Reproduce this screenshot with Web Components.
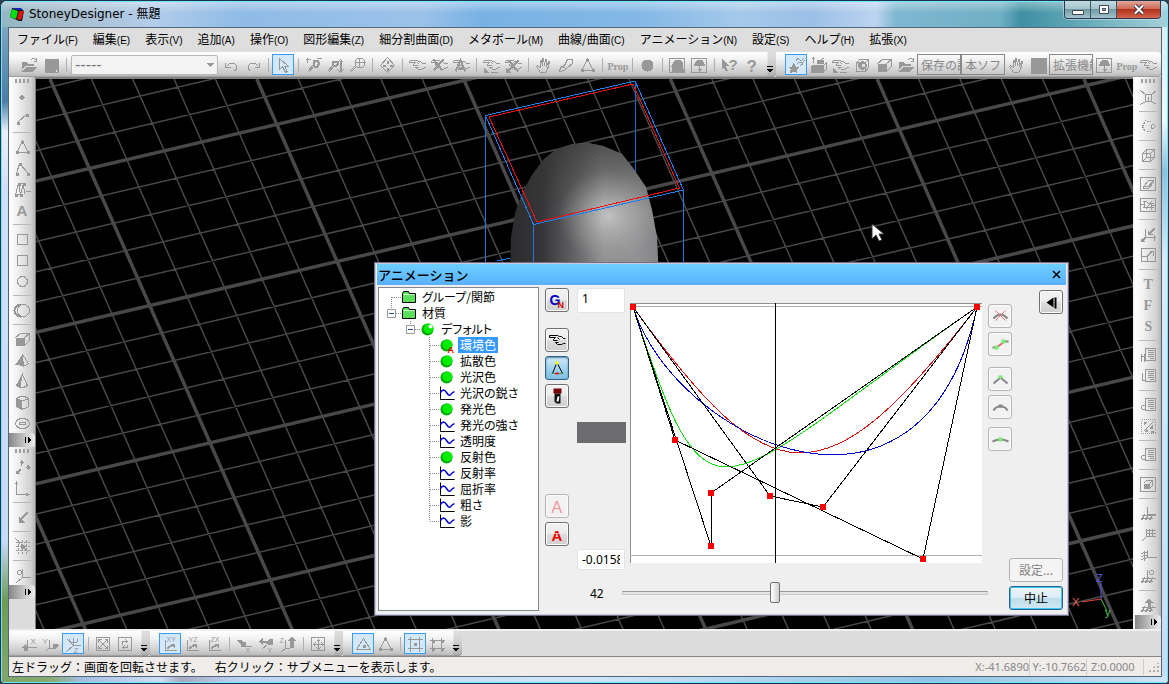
<!DOCTYPE html>
<html lang="ja">
<head>
<meta charset="utf-8">
<title>StoneyDesigner - 無題</title>
<style>
html,body{height:100%;margin:0}
body{font:12px/16px "Liberation Sans","Noto Sans CJK JP",sans-serif;color:#000;background:#2a4250;overflow:hidden}
</style>
</head>
<body>
<app-window caption="StoneyDesigner - 無題">
  <menu-bar slot="menu">
    <menu-item key="F">ファイル</menu-item><menu-item key="E">編集</menu-item><menu-item key="V">表示</menu-item><menu-item key="A">追加</menu-item><menu-item key="O">操作</menu-item><menu-item key="Z">図形編集</menu-item><menu-item key="D">細分割曲面</menu-item><menu-item key="M">メタボール</menu-item><menu-item key="C">曲線/曲面</menu-item><menu-item key="N">アニメーション</menu-item><menu-item key="S">設定</menu-item><menu-item key="H">ヘルプ</menu-item><menu-item key="X">拡張</menu-item>
  </menu-bar>
  <div slot="top" style="display:flex">
    <tool-bar items="open save | combo undo redo | *arrow | zoomPm zoomUd zoomC | move | point pointX pointA | fpoint fpointX | hand pen triNode | prop | disc | treeBox tree | help question more"></tool-bar>
    <tool-bar style="flex:1" items="*star boxes fpoint ballBox cube open t:保存の設 t:本ソフ hand block t:拡張機能 tree prop point"></tool-bar>
  </div>
  <div slot="left">
    <tool-bar vertical items="dot line | triNode angle poly letterA | rect rect circle | sphere | cube pyramid cone cylinder torus more"></tool-bar>
    <tool-bar vertical items="axes3 corner | arrowSw | gridX | origin more"></tool-bar>
  </div>
  <scene-view slot="view"></scene-view>
  <div slot="right">
    <tool-bar vertical items="boxLines | view | wire | boxWire boxMulti | axArrow boxArrow | letterT letterF letterS | sheet sheet2 | sheet3 dots | sheet3 | boxCube | planeUp gridCorner planeSide planeO | planeArrow more"></tool-bar>
  </div>
  <div slot="bottom" style="display:flex">
    <tool-bar items="rotX rotY *rotZ | fit refresh more"></tool-bar>
    <tool-bar items="*planeXY planeYZ planeZX | mvX mvY mvZ | center more"></tool-bar>
    <tool-bar items="*triDot triNode | *gridDot gridNode more"></tool-bar>
  </div>
  <status-bar slot="status" x="-41.6890" y="-10.7662" z="0.0000">左ドラッグ：画面を回転させます。　右クリック：サブメニューを表示します。</status-bar>
</app-window>

<script>
/* ---------- icon set: 16x16 grid, drawn in the current colour ---------- */
const S = (d, a = '') => `<path d="${d}" ${a}/>`;
const F = d => `<path d="${d}" fill="currentColor" stroke="none"/>`;
const T = (t, x, y, s, a = '') => `<text x="${x}" y="${y}" font-size="${s}" fill="currentColor" stroke="none" ${a}>${t}</text>`;
const point = S('M0 3h7l3 1h1l2 2h3M0 3v2h6M4 8h4M6 10h3M8 12h4l3-2h1M6 5l-2 2v1M8 5l2 2M6 10l2 2');
const lens = S('M8 7l-6 7M9 8l-6 7') + S('M8 5l1-2h3l1 2v2l-1 2H9L8 7z', 'stroke-width="2"');
const sheet = S('M5 1h10v12h-10zM7 3h6M7 5h6M7 7h6M7 9h6M9 11h4');
const cube = S('M1 6l5-4h9l-5 4v8M15 2v7l-5 5') + F('M1 6h9v8H1z');
const plane = S('M1 10h14M0 13h12M4 9l-3 6M8 9l-3 6M12 9l-3 6');
const nodes = p => p.map(([x, y]) => F(`M${x - 1} ${y - 1}h3v3h-3z`)).join('');
const star = F('M5 5l2 4h4l-3 3 1 4-4-2-4 2 1-4-3-3h4z');
const serif = 'font-family="Liberation Serif" font-weight="bold"';
const ICONS = {
  open: F('M0 5l1-1h4l1 2h6v2H4l-4 5z') + F('M1 14l4-5h11l-4 5z') + S('M9 3l2-2h2l2 2M15 0v4h-3'),
  save: F('M1 1h14v14H1z') + '<path d="M12 12h1v2h-1z" fill="#eee" stroke="none"/>',
  undo: S('M2 5v5h5M3 9l3-3h5l2 2v4l-2 1'), redo: S('M14 5v5H9M13 9l-3-3H5L3 8v4l2 1'),
  arrow: S('M4 1v11l3-3 3 6 2-1-3-5h4z'),
  zoomPm: lens + S('M0 2h5M2 0v5M11 1h5'), zoomUd: S('M6 7l-6 7M7 8l-6 7') + S('M5 5l1-1h3l1 1v2L9 8H6L5 7z', 'stroke-width="2"') + S('M13 3v11', 'stroke-width="2"') + S('M10 5l3-3 3 3M10 12l3 3 3-3'),
  zoomC: S('M6 8l-6 6M7 9l-6 6') + S('M5 5h11M10 0v10M6 3l2-2h5l2 2v5l-2 2H8L6 8z'),
  move: S('M8 0l7 8-7 7-7-7z') + F('M7 3h2v3H7zM7 10h2v3H7zM3 7h3v2H3zM10 7h3v2h-3z'),
  point, pointX: point + S('M2 2l9 11M12 2L2 13', 'stroke-width="2"'),
  pointA: point + S('M2 14L7 3l5 11M4 11h6', 'stroke-width="2"'),
  fpoint: point + F('M0 15v-5l6 5z') + S('M7 15h7'),
  fpointX: point + F('M0 15v-5l6 5z') + S('M3 3l10 11M13 3L3 13', 'stroke-width="2"'),
  hand: S('M5 15L1 9l1-1 3 2V3h1l1 5V1h1l1 7 1-6h1v7l2-5h1l-2 8-2 3z'),
  pen: S('M2 14l1-4 4-2 3-6h5v4l-5 4-3 3zM6 10l3 1'),
  triNode: S('M8 2L2 13h12z') + nodes([[7, 2], [2, 12], [13, 12]]),
  prop: T('Prop', -2, 12, 10, serif),
  disc: '<circle cx="8" cy="8" r="6" fill="currentColor" stroke="none"/>',
  treeBox: S('M0 1h15v14H0z') + F('M2 14V9l2-5 3-2h3l3 3 1 6v3z'),
  tree: S('M0 1h15v14H0zM8 8v6') + F('M2 8l2-4 3-2 4 1 3 5zM5 11h6l-3 3z'),
  help: F('M0 1l7 7-3 1 2 4-2 1-2-4-2 2z') + T('?', 7, 12, 15, 'font-weight="bold"'),
  question: T('?', 3, 14, 17, 'font-weight="bold"'),
  star: star + S('M7 4q2-4 4-2t4-1M9 7q1-3 3-2t4-2M11 9q1-2 4-3'),
  boxes: F('M0 9l3-2h10v8H0zM6 2h7v4H6z') + S('M3 5V0M1 2l2-2 2 2M13 8l3-3v7l-3 2M11 2l3-2'),
  ballBox: S('M2 5l3-3h9l-3 3v9M14 2v8l-3 4H2V5h9') + '<circle cx="8" cy="8" r="4" fill="currentColor"/><path d="M7 6h3v3H7z" fill="#ddd" stroke="none"/>',
  cube, block: F('M0 0h16v16H0z'),
  dot: F('M7 5l3 3-3 3-3-3z'), line: S('M3 12l9-8') + nodes([[3, 12], [12, 4]]),
  angle: S('M2 13L5 3l9 10') + nodes([[2, 13], [5, 3], [13, 13]]),
  poly: S('M1 13L4 2h5l-3 11zM4 2l2 11M9 2l1 11M11 10h5') + nodes([[1, 13], [6, 13], [4, 2], [9, 2]]),
  letterA: T('A', 2, 13, 15, 'font-weight="bold"'), letterT: T('T', 3, 12, 14, serif), letterF: T('F', 3, 12, 14, serif), letterS: T('S', 4, 12, 14, serif),
  rect: S('M3 3h10v10H3z'), circle: '<circle cx="8" cy="8" r="5"/>',
  sphere: '<circle cx="9" cy="8" r="6"/>' + S('M6 2a6 6 0 0 0 0 12', 'stroke-width="2"'),
  pyramid: F('M8 2L1 12l8 2z') + S('M8 2l6 9-5 3z'), cone: F('M8 1L2 12l4 2z') + S('M8 1L2 12q5 4 11 0z'),
  cylinder: F('M2 3l5 3v9l-5-3z') + S('M2 4q6-4 12 0v8q-6 5-12 0zM2 4q6 4 12 0'),
  torus: S('M1 8a7 5 0 1 0 14 0a7 5 0 1 0-14 0M5 8a3 1.500 0 1 0 6 0a3 1.500 0 1 0-6 0'),
  axes3: S('M7 6V2M6 4l1-2 2 2M11 8h4M13 6l2 2-2 2M6 10l-4 4M2 11v3h3', 'stroke-width="1.500"'),
  corner: S('M2 2v12h12M1 4l1-2 1 2M12 13l2 1-2 1'),
  arrowSw: S('M13 3L5 11', 'stroke-width="2"') + F('M4 7v6h6z'),
  gridX: S('M4 1v14M8 1v14M12 1v14M1 4h14M1 8h14M1 12h14M1 0l14 15', 'stroke-dasharray="3 1"') + F('M6 6h4v4H6z'),
  origin: S('M2 15l6-5h8M8 10V1') + '<circle cx="5" cy="5" r="2"/>',
  boxLines: S('M5 5h6v7H5zM0 1l5 4M16 1l-5 4M0 15l5-3M16 15l-5-3M8 7v5'),
  view: S('M2 8L5 2M2 8l3 6', 'stroke-dasharray="2 1"') + S('M6 3h4M6 13h4', 'stroke-dasharray="2 1"') + S('M11 6h2l2 2-2 2h-2V6'),
  wire: S('M2 6h8v8H2zM6 2h8v8H6zM2 6l4-4M10 6l4-4M2 14l4-4M10 14l4-4'),
  boxWire: S('M0 1h15v13H0zM3 10l5-6h5l-5 6zM3 10v2h5l5-6V4'),
  boxMulti: S('M0 1h15v13H0zM2 4h4l2 2h5M2 10h11M4 4v6M11 6v6M0 7h4M11 8h4M5 12l6-8'),
  axArrow: S('M5 2v9h10M14 2L8 8M8 4v4h4M5 11l-4 4M1 12v3h3M14 8v6', 'stroke-width="1.500"'),
  boxArrow: S('M1 1h14v13H1zM1 9h6v5M7 8l5-4M9 4h4v4', 'stroke-width="1.300"'),
  sheet: sheet + S('M1 9h4M1 6v8M4 6v8'), sheet2: sheet + S('M2 4v8h3'), sheet3: sheet + '<circle cx="3" cy="10" r="2"/>',
  dots: S('M1 1h14v14H1z', 'stroke-dasharray="1 1"') + S('M3 13l10-10') + F('M3 3h4l-4 4zM12 6v4H9zM6 10l2 3H5zM10 12h3v2h-3z'),
  boxCube: S('M0 1h15v14H0z', 'stroke-width="1.500"') + F('M3 7h6v5H3z') + S('M3 7l3-3h6v5l-3 3V7l3-3'),
  planeUp: plane + S('M7 11V1M7 9h8'), planeSide: S('M4 3v10M7 2v8h9M1 6l7-2M1 9l7-2M1 12l6-2'),
  gridCorner: S('M1 15l5-5M6 2v8h9M9 2v8M12 2v8M6 4h9M6 7h9'),
  planeO: plane + S('M7 11V1') + '<circle cx="11" cy="4" r="2"/>', planeArrow: plane + F('M8 1L4 5h3v6h3V5h3z'),
  rotX: S('M0 12l4-4M4 8l3 3M6 11h9M6 11V3') + F('M1 9h5v5H3z') + T('X', 9, 7, 8),
  rotY: S('M6 3v9M6 12h4M2 15l4-4') + F('M9 7h4l2 2-2 3H9z') + T('Y', -1, 7, 8),
  rotZ: S('M8 9V1M4 2v3l2 1h5l1-1V2M2 3l6 6M1 15l7-6h7') + T('Z', 8, 16, 8),
  fit: S('M1 1h13v13H1zM3 3l9 9M12 3l-9 9M3 6V3h3M9 3h3v3M3 9v3h3M12 9v3H9'),
  refresh: S('M1 1h13v13H1zM5 8V5h5M8 3l2 2-2 2M10 8v3H5M7 9l-2 2 2 2'),
  ...Object.fromEntries(['XY', 'YZ', 'ZX'].map(p => ['plane' + p, S('M3 3v11h11') + S('M5 12l5-4', 'stroke-width="2"') + F('M7 7h5v5z') + T(p, 4, 5, 7)])),
  mvX: F('M0 3h4l3 3 2-1v5H4l1-2-4-3z') + S('M6 10h9M7 7l4 4') + T('X', 9, 16, 7),
  mvY: F('M0 5l4-4v3h5l2-2h3v6H9L6 6H4v3z') + S('M4 12l5-4') + T('Y', 9, 16, 7),
  mvZ: F('M11 0l4 4h-2v7H9V4H7z') + S('M5 3v9M1 15l4-3h4') + T('Z', -1, 6, 7),
  center: S('M1 1h13v13H1zM3 8h10M8 3v10M3 8l2-2M3 8l2 2M13 8l-2-2M13 8l-2 2M8 3L6 5M8 3l2 2M8 13l-2-2M8 13l2-2'),
  triDot: S('M8 2L1 13h14z') + F('M7 8h3v3H7z'),
  gridDot: S('M3 0v15M12 0v15M0 3h15M0 12h15', 'stroke-width="1.300"') + F('M6 6h3v3H6z'),
  gridNode: S('M3 1v14M12 1v14M0 4h15M0 12h15') + nodes([[3, 4], [12, 4], [3, 12], [12, 12]]),
  /* animation panel */
  gn: T('G', 0, 12, 14, 'font-weight="bold" style="fill:#0000c0"') + T('N', 8, 15, 9, 'font-weight="bold" style="fill:#d00000"'),
  handDark: S('M0 3h8l2 1h2l2 2h2M0 3v2h6M4 8h4M6 10h3M8 12h4l2-1h2M6 5l-2 2v1M8 5l2 2M6 10l2 2', 'style="stroke:#000"'),
  tri3: S('M7 3L3 13M8 3l5 10', 'style="stroke:#000"') + S('M2 13h12', 'style="stroke:#30a060"') + '<g stroke="none"><path fill="#ff0" d="M6 1h3v3H6z"/><path fill="red" d="M6 12h3v2H6z"/></g>',
  brush: '<g stroke="none"><path fill="#700" d="M4 0h8v5H4z"/><path fill="#111" d="M5 5h6v10H7l-2-2z"/><path fill="#fff" d="M8 8h2l-1 5H7z"/></g>',
  aDim: T('A', 2, 14, 16, 'style="fill:#e99"'), aRed: T('A', 2, 14, 15, 'font-weight="bold" style="fill:#e00"') + S('M3 4h9M3 7h9', 'style="stroke:#eee" stroke-dasharray="2 1"'),
  back: '<path d="M3 8l7-5v10z" fill="#000" stroke="none"/><path d="M12 3v11" style="stroke:#000;stroke-width:2"/>',
  cut: S('M1 10q7-8 14 0', 'style="stroke:#888;stroke-width:2"') + S('M3 2l10 10M13 2L3 12', 'style="stroke:#e77"'),
  seg: S('M0 11h4M12 5h4', 'style="stroke:#888;stroke-width:2"') + S('M4 11l8-6', 'style="stroke:#e66;stroke-width:2"') + '<path d="M2 9h4v4H2zM9 3h4v4H9z" fill="#7e7" stroke="none"/>',
  peak: S('M1 12l7-6 7 6', 'style="stroke:#888;stroke-width:2"') + '<path d="M6 4h4v3H6z" fill="#7e7" stroke="none"/>',
  arc: S('M1 11q2-4 7-4t7 4', 'style="stroke:#888;stroke-width:2"') + '<path d="M6 5h4v3H6z" fill="#888" stroke="none"/>',
  flat: S('M0 10q8-4 16 0', 'style="stroke:#888;stroke-width:2"') + '<path d="M6 6h4v4H6z" fill="#7e7" stroke="none"/>',
  /* tree */
  folder: '<path d="M1 4l1-2h5l1 2h6v9H1z" fill="#5ce05c" stroke="#000"/><path d="M2 5h11" stroke="#cfc"/>',
  ball: '<circle cx="7" cy="8" r="6" fill="#0a0" stroke="none"/><circle cx="8" cy="7" r="5" fill="#0e0" stroke="none"/>',
  curve: S('M1 1v13h14', 'style="stroke:#000"') + S('M1 7q3-5 6 0t5 1l3-2', 'style="stroke:#00d;stroke-width:1.5"')
};
ICONS.ballHi = ICONS.ball + '<circle cx="10" cy="5" r="2" fill="#fff" stroke="none"/>';
ICONS.ballA = ICONS.ball + T('A', 8, 15, 9, 'font-weight="bold" style="fill:#e00"');
const svg = n => `<svg width="16" height="16" viewBox="0 0 16 16" fill="none" stroke="currentColor" overflow="visible" aria-hidden="true"><g transform="translate(.5 .5)">${ICONS[n]}</g></svg>`;

const define = (tag, render) => customElements.define(tag, class extends HTMLElement {
  connectedCallback() {
    if (this.shadowRoot) return;
    this.attachShadow({ mode: 'open' }).innerHTML = render(this);
  }
});

/* ---------- window frame ---------- */
define('app-window', el => `<style>
:host{display:block;height:100%;box-sizing:border-box;border:1px solid #1c3548;border-radius:7px 7px 5px 5px;overflow:hidden;background:#8ab}
.frame{height:100%;box-sizing:border-box;display:grid;grid-template:26px 1fr / 1fr;padding:0 7px 7px;
 box-shadow:inset 0 0 0 1px #6fe4ff;
 background:linear-gradient(180deg,#fff6 0,#fff0 12px,#fff0 100%) 0 0/100% 26px no-repeat,
 linear-gradient(90deg,#93b6c2 0,#a5bccb 60px,#b3cdea 150px,#8fbbe6 240px,#9cc2e9 420px,#78b2e4 480px,#84b8e6 640px,#a5c9ea 740px,#9bbfe6 810px,#bcd4f0 875px,#7fb7d0 895px,#6fafc4 1000px,#3f8fa3 1020px,#6aaebb 1090px,#a6d0d8 100%) 0 0/100% 26px no-repeat,
 linear-gradient(90deg,#7fa465 0,#88ab70 50px,#a3bde0 80px,#cfdff6 160px,#a9a9c2 180px,#bcd6f4 240px,#cfe6fa 50%,#90c4e4 80%,#d0e4f6 100%) 0 100%/100% 7px no-repeat,
 linear-gradient(180deg,#8db4cc 0,#4a7ea8 100px,#e8f0fa 130px,#cfe0fa 190px,#c8dafa 540px,#6f9a55 600px,#83a96a 100%) 0 0/7px 100% no-repeat,
 linear-gradient(180deg,#d5ecee 0,#f0fafa 120px,#8fc0dc 170px,#dcebf6 260px,#c6dcf0 100%) 100% 0/7px 100% no-repeat}
header{display:flex;align-items:center;padding-left:1px;gap:4px}
h1{flex:1;margin:0;font:12px/20px "DejaVu Sans","Noto Sans CJK JP",sans-serif}
.win{display:flex;align-self:start;border:1px solid #335;border-top:0;border-radius:0 0 4px 4px;overflow:hidden;box-shadow:0 0 0 1px #cfe8ee88}
.win button{width:26px;height:17px;border:0;border-right:1px solid #456;padding:0;display:grid;place-items:center;background:linear-gradient(#c3dbe0,#a3c4cb 45%,#6f9ba5 50%,#a1c5cc)}
.win button:last-child{width:43px;border:0;background:linear-gradient(#e2a79b,#cc6a58 45%,#b2301c 50%,#d2654c)}
.client{min-height:0;display:grid;grid-template:24px 25px 1fr 27px 20px / 27px 1fr 28px;background:#dcdcdc;border:1px solid #50687a;margin:0 -1px -1px 0}
.menu,.top,.bottom,.status{grid-column:1/-1;min-width:0;overflow:hidden}
.left{border-right:1px solid #808080}.right{border-left:2px solid #f4f4f4;overflow:hidden}
.view{min-width:0;min-height:0;position:relative;border-top:2px solid #808080}
.bottom{border-top:2px solid #f0f0f0}
</style>
<div class="frame"><header>
<svg width="16" height="16" viewBox="0 0 16 16"><path d="M3 2l9 1 3 2-2 10-3 0-9-4z" fill="#111"/><path d="M3 3l6 2-2 8-6-2z" fill="#00e010"/><path d="M3 2h9l2 2-5 0z" fill="#1020c0"/><path d="M10 5l5 0-3 9-4-1z" fill="#e01010"/></svg>
<h1>${el.getAttribute('caption')}</h1>
<div class="win"><button aria-label="最小化"><svg width="12" height="12"><path d="M0.500 6.500h11v4h-11z" fill="#fff" stroke="#445"/></svg></button><button aria-label="最大化"><svg width="12" height="12"><path d="M1.500 1.500h9v8h-9z" fill="#fff" stroke="#445"/><path d="M4.500 4.500h3v2h-3z" fill="#9bb" stroke="#445"/></svg></button><button aria-label="閉じる"><svg width="12" height="12"><path d="M2 1.500l8 8M10 1.500l-8 8" stroke="#434" stroke-width="4"/><path d="M2 1.500l8 8M10 1.500l-8 8" stroke="#fff" stroke-width="2"/></svg></button></div>
</header>
<div class="client"><div class="menu"><slot name="menu"></slot></div><div class="top"><slot name="top"></slot></div>
<div class="left"><slot name="left"></slot></div><div class="view"><slot name="view"></slot></div><div class="right"><slot name="right"></slot></div>
<div class="bottom"><slot name="bottom"></slot></div><div class="status"><slot name="status"></slot></div></div></div>`);

define('menu-bar', () => `<style>:host{display:flex;height:24px;align-items:center;gap:15px;padding-left:8px;background:#dedede;white-space:nowrap}</style><slot></slot>`);
define('menu-item', el => `<style>:host{display:block;flex:none}a{color:#000;text-decoration:none;font:12px/16px "Noto Sans CJK JP",sans-serif}span{font:10px/16px "Liberation Sans",sans-serif}</style><a href="#"><slot></slot><span>(${el.getAttribute('key')})</span></a>`);

/* ---------- tool bars ---------- */
define('tool-bar', el => {
  const item = t => {
    if (t === '|') return '<i class="sep"></i>';
    if (t === 'more') return '<button class="more" aria-label="その他"><svg width="9" height="9" viewBox="0 0 9 9"><path d="M2 1h6" stroke="#000"/><path d="M2 4h6l-3 4z" fill="#000"/></svg></button>';
    if (t === 'combo') return '<select aria-label="選択"><option>-----</option></select>';
    if (t.startsWith('t:')) return `<button class="txt">${t.slice(2)}</button>`;
    const on = t[0] === '*', n = on ? t.slice(1) : t;
    return `<button class="${on ? 'on' : ''}" aria-label="${n}">${svg(n)}</button>`;
  };
  return `<style>
:host{display:flex;height:25px;align-items:center;color:#989898;background:linear-gradient(#fff 0,#f2f2f2 30%,#c8c8c8 85%,#b4b4b4);border-radius:0 4px 4px 0;box-shadow:inset 0 -1px #a0a0a0}
:host([vertical]){height:auto;width:26px;flex-direction:column;background:linear-gradient(90deg,#fff 0,#f2f2f2 30%,#cfcfcf 85%,#b4b4b4);border-radius:0 0 4px 4px;box-shadow:none}
button{flex:none;box-sizing:border-box;width:22px;height:21px;border:0;padding:0;background:none;color:inherit;display:grid;place-items:center}
svg{display:block;font-family:"Liberation Sans",sans-serif;shape-rendering:crispEdges}
.on{border:1px solid #3c9cf4;background:#d3e8fb}
.grip{flex:none;width:9px;height:16px;background:radial-gradient(#a0a0a0 1px,#0000 1px) 0 0/9px 4px}
.sep{flex:none;width:8px;height:14px;background:linear-gradient(#b0b0b0,#b0b0b0) 4px 0/1px 100% no-repeat}
.more{width:14px;height:25px;align-items:end;padding:0 0 3px;background:linear-gradient(90deg,#fff0 0 5px,#8884 6px,#8884);border-radius:0 4px 4px 0}
select{appearance:none;width:147px;height:20px;margin:0 2px 0 1px;padding:0 3px;border:1px solid #b8b8b8;border-radius:2px;color:#777;font:16px/16px "Liberation Sans",sans-serif;background:linear-gradient(to bottom left,#999 50%,#0000 50%) 135px 7px/4px 4px no-repeat,linear-gradient(to bottom right,#999 50%,#0000 50%) 139px 7px/4px 4px no-repeat,#f3f3f3}
.txt{display:block;width:44px;height:21px;border:1px solid #888;padding:0 0 0 3px;overflow:hidden;white-space:nowrap;text-align:left;color:#888;font:12px/18px "Noto Sans CJK JP",sans-serif}
:host([vertical]) .grip{width:16px;height:9px;background:radial-gradient(#a0a0a0 1px,#0000 1px) 0 0/4px 8px}
:host([vertical]) .sep{width:18px;height:8px;background:linear-gradient(#b8b8b8,#b8b8b8) 0 4px/100% 1px no-repeat}
:host([vertical]) .more{width:26px;height:14px;padding:0 2px 0 0;place-items:center end;background:linear-gradient(90deg,#888,#eee)}
:host([vertical]) .more svg{transform:rotate(-90deg)}
</style><i class="grip"></i>${el.getAttribute('items').split(' ').map(item).join('')}`;
});

define('status-bar', el => `<style>
:host{display:flex;height:20px;align-items:center;box-sizing:border-box;border-top:1px solid #888;background:#efecea;padding-left:3px;font:12px/18px "Noto Sans CJK JP",sans-serif;white-space:nowrap;text-spacing-trim:space-all}
p{flex:1;margin:0;min-width:0;overflow:hidden}
span{flex:none;box-sizing:border-box;width:57px;border-right:1px solid #ccc;color:#888;text-align:right;font:11px/16px "Noto Sans",sans-serif}
span:last-of-type{text-align:left;padding-left:4px}
i{width:17px;height:12px;background:radial-gradient(#aaa 1px,#0000 1px) 4px 0/4px 4px;clip-path:polygon(100% 0,100% 100%,20% 100%)}
</style><p><slot></slot></p><span>X:${el.getAttribute('x')}</span><span>Y:${el.getAttribute('y')}</span><span>Z:${el.getAttribute('z')}</span><i></i>`);

/* ---------- 3D viewport ---------- */
define('scene-view', () => {
  let thin = '', thick = '';
  const add = (k, d) => { k % 5 ? thin += d : thick += d; };
  for (let k = -5; k < 110; k++) {
    const y = 102 + 30.27 * k;
    add(k, `M0 ${y.toFixed(1)}L3000 ${(y - 705).toFixed(1)}`);
  }
  for (let k = -40; k < 70; k++) {
    const x = 14 + 41.36 * k;
    add(k, `M${x.toFixed(1)} 0L${(x + 660).toFixed(1)} 1500`);
  }
  return `<style>
:host{display:block;position:absolute;inset:0;background:#000;overflow:hidden}
.scene{display:block;width:100%;height:100%}
.axes{position:absolute;right:18px;bottom:0}
anim-panel{position:absolute;left:338px;top:183px}
</style>
<svg class="scene" fill="none">
<defs>
<linearGradient id="body"><stop offset="0" stop-color="#2c2c2e"/><stop offset=".22" stop-color="#363638"/><stop offset=".42" stop-color="#606062"/><stop offset=".62" stop-color="#909092"/><stop offset=".85" stop-color="#929294"/><stop offset="1" stop-color="#848486"/></linearGradient>
<linearGradient id="top" x2="0" y2="1"><stop offset="0" stop-color="#333" stop-opacity=".7"/><stop offset=".5" stop-color="#333" stop-opacity="0"/></linearGradient>
<radialGradient id="shine" cx=".66" cy=".54" r=".34"><stop offset="0" stop-color="#dcdcdc" stop-opacity=".65"/><stop offset="1" stop-color="#aaa" stop-opacity="0"/></radialGradient>
<path id="dome" d="M474 200L475 158 479 134 486 114 496 96 507 81 519 71 536 65 552 64 567 67 586 75 597 89 610 108 616 131 621 158 623 200z"/></defs>
<path d="${thin}" stroke="#484848" stroke-width="1.500"/><path d="${thick}" stroke="#484848" stroke-width="3.500"/>
<path d="M599.500 2V100" stroke="#1c6ad0"/>
<use href="#dome" fill="url(#body)"/><use href="#dome" fill="url(#top)"/><use href="#dome" fill="url(#shine)"/>
<path d="M449.500 36V186M497.500 145V186M647.500 111V186" stroke="#1e78e0"/>
<g shape-rendering="crispEdges"><path d="M449.500 36.500L599 2 647.500 111 497.500 145.500zM461 182l13-3" stroke="#1e80f0"/>
<path d="M453 38L597 5 643.500 109 501 143z" stroke="#f01010"/></g>
<path d="M836 145v15l4-4 3 6 3-1-3-6h5z" fill="#fff" stroke="#333"/>
</svg>
<svg class="axes" width="46" height="60" viewBox="0 0 46 60" fill="none" font-family="Liberation Sans" font-size="11"><path d="M32 30V14" stroke="#5050e0"/><path d="M32 30l-19 3" stroke="#f04040"/><path d="M32 30l6 12" stroke="#40d040"/><text x="27" y="13" fill="#5858e8">Z</text><text x="3" y="37" fill="#f06060">X</text><text x="36" y="47" fill="#60d060">y</text></svg>
<anim-panel></anim-panel>`;
});

/* ---------- animation panel ---------- */
define('anim-panel', () => `<style>
:host{display:grid;box-sizing:border-box;width:695px;grid-template-rows:21px 1fr;border:2px solid #c9c9e6;outline:1px solid #707084;outline-offset:-1px;background:#efefef;padding:0 1px}
header{display:flex;justify-content:space-between;align-items:center;background:linear-gradient(#6ccfff,#5ab0ff);padding:0 3px 0 1px}
h2{margin:0;font:500 13px/20px "Noto Sans CJK JP",sans-serif}
header button{border:0;background:none;padding:0;width:13px;height:13px}
.body{display:grid;grid-template-columns:161px 24px 49px minmax(0,1fr) 24px 46px;column-gap:5px;padding:2px 3px 3px 1px}
.col{display:flex;flex-direction:column;align-items:start;gap:4px}
.modes{padding:1px 0 0 1px}.gap{height:8px}.push{flex:1}
.vals{padding:1px 0 0 4px}
input[type=text]{box-sizing:border-box;width:48px;border:1px solid #e0e4ea;border-radius:2px;margin:0;padding:0 4px;background:#fff;font:12px/18px "Noto Sans",sans-serif}
.hi{height:25px;padding-bottom:4px!important}.lo{height:21px}
.swatch{width:49px;height:21px;background:#6c6c70}
output{font:12px/20px "Noto Sans",sans-serif;padding:0 0 0 13px}
.graph{display:flex;flex-direction:column;padding:16px 0 0;margin-left:3px}
curve-editor{height:260px;width:352px}
input[type=range]{appearance:none;background:none;width:366px;height:22px;margin:19px 0 0 -8px}
input[type=range]::-webkit-slider-runnable-track{height:4px;box-sizing:border-box;border:1px solid #ccc;border-top-color:#999;background:#e4e4e4}
input[type=range]::-webkit-slider-thumb{appearance:none;box-sizing:border-box;width:10px;height:21px;margin-top:-10px;border:1px solid #707070;border-radius:2px;background:linear-gradient(90deg,#fff,#d0d0d0)}
.side{padding:17px 0 0}
.end{align-items:end;padding:3px 0 1px}
.cmd{flex:none;box-sizing:border-box;width:54px;height:24px;border-radius:3px;padding:0;font:12px/20px "Noto Sans CJK JP",sans-serif}
.cmd:disabled{border:1px solid #adb2b5;background:#f4f4f4;color:#838383}
.stop{border:1px solid #2c628b;box-shadow:inset 0 0 0 1px #36c8f0;background:linear-gradient(#eef6fa,#dcebf3 50%,#c0dceb 50%,#d0e8f2)}
</style>
<header><h2>アニメーション</h2><button aria-label="閉じる"><svg width="13" height="13"><path d="M3 3l7 7M10 3l-7 7" stroke="#000" stroke-width="1.500"/></svg></button></header>
<div class="body">
<tree-view></tree-view>
<div class="col modes"><icon-button icon="gn"></icon-button><i class="gap"></i><icon-button icon="handDark"></icon-button><icon-button icon="tri3" pressed></icon-button><icon-button icon="brush"></icon-button><i class="push"></i><icon-button icon="aDim" faint></icon-button><icon-button icon="aRed"></icon-button><i style="height:61px"></i></div>
<div class="col vals"><input type="text" class="hi" value="1" aria-label="最大値"><i style="height:101px"></i><div class="swatch"></div><i class="push"></i><input type="text" class="lo" value="-0.0158" aria-label="最小値"><i style="height:6px"></i><output for="frame">42</output><i style="height:3px"></i></div>
<div class="graph"><curve-editor></curve-editor><input type="range" id="frame" aria-label="フレーム" min="0" max="101" value="42"></div>
<div class="col side"><icon-button icon="cut" faint></icon-button><icon-button icon="seg" faint></icon-button><i style="height:3px"></i><icon-button icon="peak" faint></icon-button><icon-button icon="arc" faint></icon-button><i></i><icon-button icon="flat" faint></icon-button></div>
<div class="col end"><icon-button icon="back"></icon-button><i class="push"></i><button class="cmd" disabled>設定...</button><button class="cmd stop">中止</button></div>
</div>`);

define('icon-button', el => `<style>
:host{display:block}
button{display:grid;place-items:center;box-sizing:border-box;width:24px;height:24px;padding:0;border:1px solid #707070;border-radius:3px;box-shadow:inset 0 0 0 1px #fcfcfc;background:linear-gradient(#f2f2f2,#ebebeb 50%,#dddddd 50%,#cfcfcf);color:#000}
:host([faint]) button{border-color:#b4b4b4;background:#f2f2f2}
:host([pressed]) button{border-color:#2c628b;box-shadow:inset 0 1px 2px #5088a8;background:linear-gradient(#d4ecf8,#a4d4ee 50%,#80bfe2)}
svg{font-family:"Liberation Sans",sans-serif}
</style><button aria-label="${el.getAttribute('icon')}">${svg(el.getAttribute('icon'))}</button>`);

define('tree-view', () => {
  const rows = [[0, 'folder', 'グループ/関節', 'first'], [0, 'folder', '材質', 'box last'], [1, 'ballHi', 'デフォルト', 'box last'],
    [2, 'ballA', '環境色', 'sel'], [2, 'ball', '拡散色', ''], [2, 'ball', '光沢色', ''], [2, 'curve', '光沢の鋭さ', ''], [2, 'ball', '発光色', ''],
    [2, 'curve', '発光の強さ', ''], [2, 'curve', '透明度', ''], [2, 'ball', '反射色', ''], [2, 'curve', '反射率', ''], [2, 'curve', '屈折率', ''], [2, 'curve', '粗さ', ''], [2, 'curve', '影', 'last']];
  return `<style>
:host{display:block;box-sizing:border-box;height:324px;border:1px solid #828790;background:#fff;overflow:hidden}
ul{list-style:none;margin:0;padding:1px 0 0 3px}
li{display:flex;height:16px;align-items:center;font:12px/16px "Noto Sans CJK JP",sans-serif;font-feature-settings:"palt"}
svg{flex:none;display:block;font-family:"Liberation Sans",sans-serif}
.ic{width:19px}
span{padding:0 2px}.sel span{background:#3399ff;color:#fff}
</style><ul role="tree">${rows.map(([d, ic, t, c]) => `<li role="treeitem" class="${c}" style="padding-left:${d * 19}px"><svg width="19" height="16" fill="none"><path d="M9.500 ${c.includes('first') ? 8 : 0}V${c.includes('last') ? 8 : 16}M10 8.500h9" stroke="#888" stroke-dasharray="1 1"/>${c.includes('box') ? '<path d="M5.500 4.500h8v8h-8z" fill="#fff" stroke="#999"/><path d="M7 8.500h5" stroke="#234a9a"/>' : ''}</svg><div class="ic">${svg(ic)}</div><span>${t}</span></li>`).join('')}</ul>`;
});

define('curve-editor', () => {
  const pts = [[3, 4], [347, 4], [45, 137], [81, 190], [81, 243], [140, 193], [193, 204], [293, 256]];
  return `<style>:host{display:block}svg{display:block;width:352px;height:260px;background:#fff}</style>
<svg viewBox="0 0 352 260" fill="none" role="img" aria-label="カーブ"><g shape-rendering="crispEdges">
<path d="M0 .5H352M.5 0V260" stroke="#909090"/><path d="M0 3.500H352M0 252.500H352" stroke="#b0b0b0"/>
<path d="M3 4C140 193 193 204 347 4" stroke="#d81010"/><path d="M3 4C81 243 81 190 347 4" stroke="#10e010"/><path d="M3 4C45 137 293 256 347 4" stroke="#0000d8"/>
<path d="M3 4L140 193 193 204 347 4M3 4L81 243V190L347 4M3 4L45 137 293 256 347 4M145.500 0V260" stroke="#000"/></g>
${pts.map(([x, y]) => `<path d="M${x - 3} ${y - 3}h6v6h-6z" fill="#f00"/>`).join('')}</svg>`;
});
</script>
</body>
</html>
